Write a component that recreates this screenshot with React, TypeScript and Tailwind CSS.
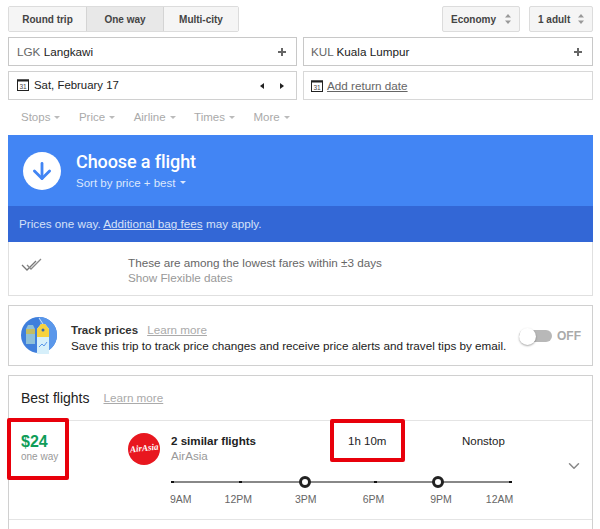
import { ChevronDown, ArrowDown } from 'lucide-react';

const filters = ['Stops', 'Price', 'Airline', 'Times', 'More'];

const markers = [
  { left: 'left-[0px]', ring: false },
  { left: 'left-[68px]', ring: false },
  { left: 'left-[134px]', ring: true },
  { left: 'left-[203px]', ring: false },
  { left: 'left-[267px]', ring: true },
  { left: 'left-[338px]', ring: false },
];

const hours = [
  { label: '9AM', gap: 'ml-0' },
  { label: '12PM', gap: 'ml-[33px]' },
  { label: '3PM', gap: 'ml-[43px]' },
  { label: '6PM', gap: 'ml-[46px]' },
  { label: '9PM', gap: 'ml-[46px]' },
  { label: '12AM', gap: 'ml-[34px]' },
];

function CalendarIcon() {
  return (
    <svg width="12" height="12" viewBox="0 0 12 12" className="shrink-0">
      <rect x="0.5" y="1" width="11" height="10.5" fill="#fff" stroke="#222" />
      <rect x="0" y="0.5" width="12" height="2" fill="#222" />
      <text x="6" y="9.5" textAnchor="middle" fontSize="6.5" fill="#444" fontFamily="Liberation Sans, sans-serif">31</text>
    </svg>
  );
}

function UpDown() {
  return (
    <svg width="6" height="10" viewBox="0 0 6 10" className="shrink-0">
      <path d="M3 0 L6 3.5 H0 Z M0 6.5 H6 L3 10 Z" fill="#999" />
    </svg>
  );
}

function Caret({ color = 'border-t-[#bbb]' }: { color?: string }) {
  return <span className={`inline-block w-0 h-0 border-x-[3px] border-x-transparent border-t-[3px] ${color}`} />;
}

function Plus() {
  return (
    <svg width="8" height="8" viewBox="0 0 8 8" className="shrink-0">
      <path d="M3 0h2v3h3v2H5v3H3V5H0V3h3z" fill="#666" />
    </svg>
  );
}

function TagsIcon() {
  return (
    <svg width="36" height="38" viewBox="0 0 36 38" className="shrink-0">
      <circle cx="18" cy="18" r="18" fill="#3f7fdc" />
      <path d="M18 0 A18 18 0 0 1 36 18 A18 18 0 0 1 24 35 Z" fill="#5a97ea" />
      <path d="M18 1 L24 10" stroke="#cfe3f7" strokeWidth="1" />
      <path d="M5 12 L7 8 H12 L14 12 V27 H5 Z" fill="#8fc0d8" />
      <rect x="5" y="12" width="9" height="5" fill="#c3bd63" />
      <path d="M16 12 L20 7 H24 L28 12 V37 H16 Z" fill="#d6effa" />
      <path d="M16 12 L20 7 H24 L28 12 V20 H16 Z" fill="#f7d23e" />
      <circle cx="22" cy="13" r="1.5" fill="#3b6aa8" />
      <path d="M18 30 L21 27 L23 29 L26 25" stroke="#5a97ea" strokeWidth="1" fill="none" />
    </svg>
  );
}

export default function App() {
  return (
    <div className="relative w-[600px] h-[529px] overflow-hidden bg-white pl-2 pr-[7px] pt-[6px] font-['Liberation_Sans',Arial,sans-serif] text-[11.7px] text-[#222]">
      {/* Trip type + cabin */}
      <div className="flex justify-between h-[26px]">
        <div className="flex rounded-[2px] border border-[#dcdcdc] text-[10px] font-bold text-[#444]">
          <div className="w-[77px] flex items-center justify-center bg-[#f5f5f5]">Round trip</div>
          <div className="w-[78px] flex items-center justify-center bg-[#e8e8e8] border-x border-[#d4d4d4]">One way</div>
          <div className="w-[74px] flex items-center justify-center bg-[#f5f5f5]">Multi-city</div>
        </div>
        <div className="flex gap-[9px] text-[10px] font-bold text-[#444]">
          <div className="w-[78px] flex items-center justify-between pl-2 pr-[8px] bg-[#f5f5f5] border border-[#dcdcdc] rounded-[2px]">
            Economy <UpDown />
          </div>
          <div className="w-[64px] flex items-center justify-between pl-2 pr-[8px] bg-[#f5f5f5] border border-[#dcdcdc] rounded-[2px]">
            1 adult <UpDown />
          </div>
        </div>
      </div>

      {/* Places and dates */}
      <div className="grid grid-cols-[289px_290px] gap-x-[6px] gap-y-[5px] mt-[5px]">
        <div className="h-[29px] border border-[#c8c8c8] flex items-center justify-between pl-2 pr-[10px]">
          <span><span className="text-[#666]">LGK</span> Langkawi</span>
          <Plus />
        </div>
        <div className="h-[29px] border border-[#c8c8c8] flex items-center justify-between pl-[7px] pr-[10px]">
          <span><span className="text-[#666]">KUL</span> Kuala Lumpur</span>
          <Plus />
        </div>
        <div className="h-[29px] border border-[#d0d0d0] flex items-center justify-between pl-2 pr-[12px]">
          <span className="flex items-center gap-[5px] text-[11.4px]"><CalendarIcon /> Sat, February 17</span>
          <span className="flex items-center gap-[16px]">
            <span className="w-0 h-0 border-y-[3.5px] border-y-transparent border-r-[4px] border-r-[#222]" />
            <span className="w-0 h-0 border-y-[3.5px] border-y-transparent border-l-[4px] border-l-[#222]" />
          </span>
        </div>
        <div className="h-[29px] border border-[#d8d8d8] flex items-center pl-[7px] gap-[4px] text-[#666]">
          <CalendarIcon />
          <span className="underline">Add return date</span>
        </div>
      </div>

      {/* Filters */}
      <div className="flex h-[35px] items-center pl-[13px] gap-[18.5px] text-[#aaa] text-[11.5px]">
        {filters.map((f) => (
          <span key={f} className="flex items-center gap-[4px]">{f} <Caret /></span>
        ))}
      </div>

      {/* Choose a flight */}
      <div className="h-[71px] bg-[#4285f4] flex items-center pl-[15px] text-white">
        <div className="w-[38px] h-[38px] rounded-full bg-white flex items-center justify-center">
          <ArrowDown className="w-[26px] h-[26px] text-[#4285f4]" strokeWidth={2.6} />
        </div>
        <div className="ml-[15px]">
          <div className="text-[18px] leading-[22px] font-medium font-['Roboto',sans-serif] tracking-[-0.1px]">Choose a flight</div>
          <div className="text-[11.5px] leading-[16px] mt-[2px] text-[#dbe7fd] flex items-center gap-[5px]">Sort by price + best <Caret color="border-t-[#dbe7fd]" /></div>
        </div>
      </div>
      <div className="h-[36px] bg-[#3367d6] flex items-center pl-[11px] text-[#d5e1f8]">
        <span>Prices one way. <span className="underline">Additional bag fees</span> may apply.</span>
      </div>

      {/* Lowest fares note */}
      <div className="h-[54px] border border-t-0 border-[#e0e0e0] flex">
        <div className="w-[119px] pl-[12px] pt-[16px]">
          <svg width="22" height="14" viewBox="0 0 22 14">
            <path d="M1 7 L6 12 L15 3" stroke="#777" strokeWidth="1.3" fill="none" />
            <path d="M6 7 L10 11 L20 1" stroke="#888" strokeWidth="1.3" fill="none" />
          </svg>
        </div>
        <div className="pt-[13px] leading-[15px]">
          <div className="text-[#666]">These are among the lowest fares within ±3 days</div>
          <div className="text-[#999]">Show Flexible dates</div>
        </div>
      </div>

      {/* Track prices */}
      <div className="mt-[9px] h-[61px] border border-[#d0d0d0] flex items-center pl-[12px] pr-[11px]">
        <TagsIcon />
        <div className="ml-[14px] mt-[4px] flex-1">
          <div className="leading-[16px]">
            <span className="font-bold text-[11.5px] text-[#333]">Track prices</span>
            <span className="ml-[9px] underline text-[#aaa] text-[11.7px]">Learn more</span>
          </div>
          <div className="leading-[16px] text-[11.7px]">Save this trip to track price changes and receive price alerts and travel tips by email.</div>
        </div>
        <div className="flex items-center gap-[5px] mt-[1px] ml-[2px]">
          <div className="relative w-[33px] h-[12px] rounded-full bg-[#b8b8b8]">
            <div className="absolute left-0 -top-[2px] w-[17px] h-[17px] rounded-full bg-white shadow-[0_1px_2px_rgba(0,0,0,0.35)]" />
          </div>
          <span className="font-bold text-[#aaa] text-[12px]">OFF</span>
        </div>
      </div>

      {/* Best flights */}
      <div className="mt-[9px] h-[170px] border border-b-0 border-[#d0d0d0]">
        <div className="h-[45px] flex items-center pl-[12px] border-b border-[#e4e4e4]">
          <span className="text-[14px] text-[#222]">Best flights</span>
          <span className="ml-[14px] underline text-[#aaa] text-[11.7px]">Learn more</span>
        </div>
        <div className="h-[99px] border-b border-[#e4e4e4] flex pt-[13px]">
          <div className="w-[104px] pl-[12px]">
            <div className="text-[16px] leading-[16px] font-bold text-[#0f9d58]">$24</div>
            <div className="text-[10px] leading-[12px] text-[#999] mt-[1px]">one way</div>
          </div>
          <div className="w-[15px]" />
          <div className="flex-1">
            <div className="flex">
              <div className="w-[32px] h-[32px] -mt-[1px] rounded-full bg-[#e8171f] flex items-center justify-center text-white text-[9px] italic font-bold font-['Liberation_Serif',serif] shrink-0">
                <span className="-rotate-6">AirAsia</span>
              </div>
              <div className="ml-[11px] w-[177px]">
                <div className="text-[11.6px] leading-[14px] font-bold text-[#222]">2 similar flights</div>
                <div className="text-[11.6px] leading-[16px] text-[#999]">AirAsia</div>
              </div>
              <div className="w-[114px] text-[11.5px] leading-[14px] text-[#222]">1h 10m</div>
              <div className="text-[11.5px] leading-[14px] text-[#222]">Nonstop</div>
              <ChevronDown className="absolute left-[565px] top-[457px] w-[18px] h-[18px] text-[#888]" strokeWidth={2} />
            </div>
            <div className="relative ml-[43px] mt-[11px] w-[339px] h-[12px]">
              <div className="absolute left-0 right-0 top-[5px] h-[2px] bg-[#888]" />
              {markers.map((m) =>
                m.ring ? (
                  <div key={m.left} className={`absolute ${m.left} -ml-[6px] top-0 w-[12px] h-[12px] rounded-full bg-white border-[3px] border-[#222]`} />
                ) : (
                  <div key={m.left} className={`absolute ${m.left} top-[5px] w-[3px] h-[2px] bg-[#111]`} />
                )
              )}
            </div>
            <div className="ml-[42px] mt-[5px] flex text-[10.5px] text-[#666] leading-[12px]">
              {hours.map((h) => (
                <span key={h.label} className={h.gap}>{h.label}</span>
              ))}
            </div>
          </div>
        </div>
      </div>

      {/* Red annotations */}
      <div className="absolute left-[7px] top-[418px] w-[62px] h-[62px] border-[4px] border-[#e8000b] rounded-[2px]" />
      <div className="absolute left-[330px] top-[419px] w-[75px] h-[43px] border-[4px] border-[#e8000b] rounded-[2px]" />
    </div>
  );
}
